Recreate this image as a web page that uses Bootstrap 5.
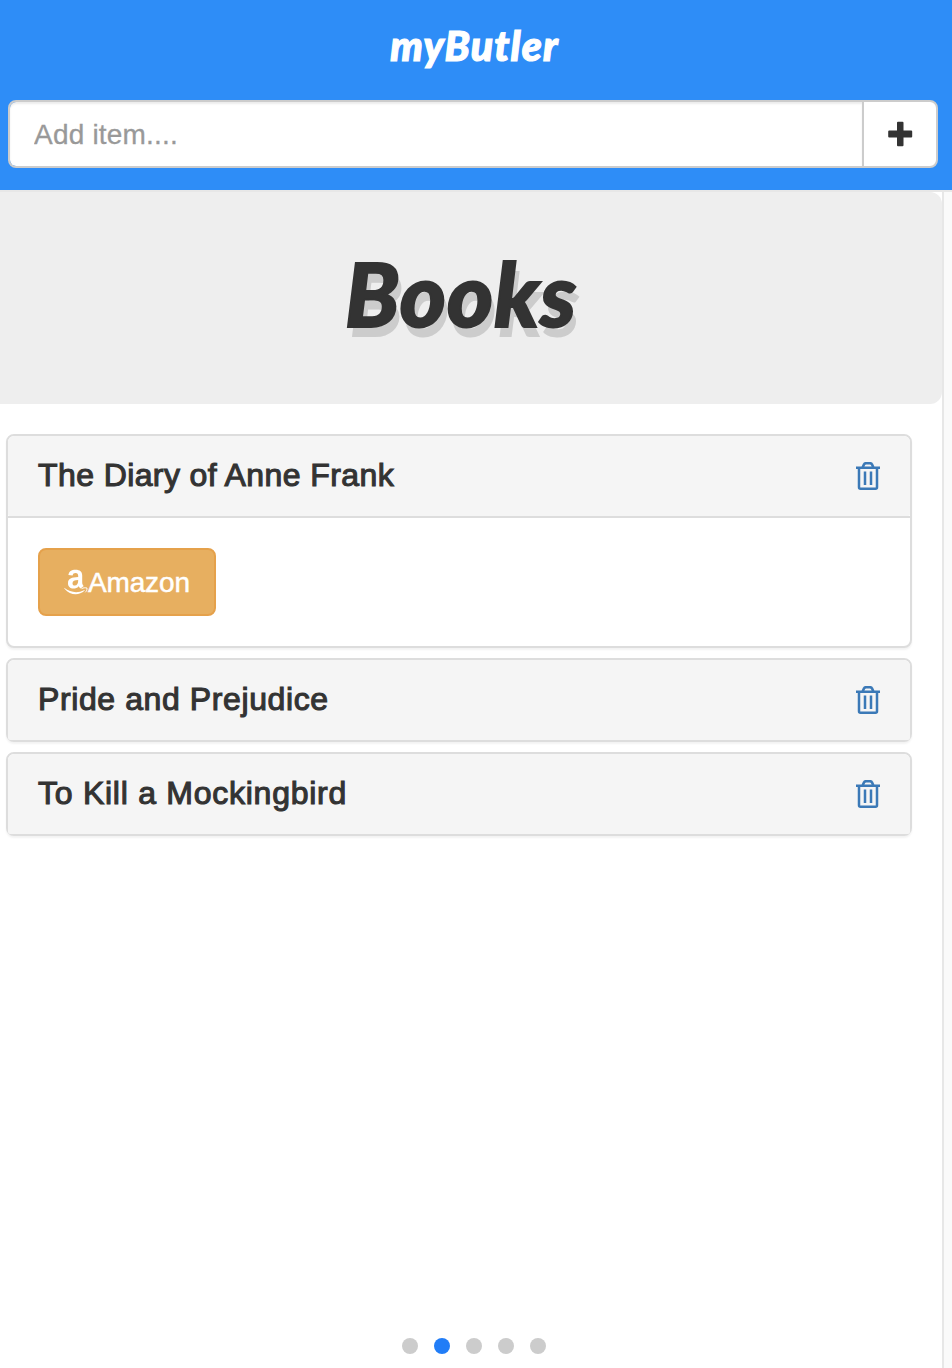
<!DOCTYPE html>
<html lang="en">
<head>
<meta charset="utf-8">
<meta name="viewport" content="width=device-width, initial-scale=1">
<title>myButler</title>
<link href="https://cdn.jsdelivr.net/npm/bootstrap@5.3.0/dist/css/bootstrap.min.css" rel="stylesheet">
<style>
body{font-family:"Liberation Sans",Arial,sans-serif;color:#333;background:#fff;height:1368px;overflow:hidden}
.topbar{height:192px;background:#2e8df7;border-bottom:2px solid #e7e7e7;padding:0 14px 0 8px}
.script{font-family:Lato,"Liberation Sans",sans-serif;font-weight:900;font-style:italic;line-height:1;stroke-linejoin:round}
.brand{height:100px;font-size:41px;letter-spacing:1.1px;padding:25px 0 0 3px;-webkit-text-stroke:1.2px #fff}
.add-form{height:68px}
.add-form .form-control{border:2px solid #ccc;border-radius:8px;padding:2px 24px 0;font-size:28px;letter-spacing:.2px;box-shadow:inset 0 2px 2px rgba(0,0,0,.075)}
.add-form .form-control::placeholder{color:#999;opacity:1;-webkit-text-stroke:.3px #999}
.add-form .btn{width:76px;border:2px solid #ccc;border-radius:8px;background:#fff;padding:0}
.add-form.input-group > .btn:not(:first-child){margin-left:-2px!important}
.slide-page{width:944px;border-right:2px solid #e7e7e7}
.next-page{background:#fafafa}
.hero{height:212px;background:#eee;border-radius:0 12px 12px 0;padding:57px 20px 0 0}
.hero h1{font-size:88px;letter-spacing:1px;text-shadow:4px 10px 0 #ccc;-webkit-text-stroke:2px #333}
.items{padding:30px 30px 0 6px;gap:10px}
.item{border:2px solid #ddd;border-radius:8px;box-shadow:0 2px 2px rgba(0,0,0,.05)}
.item .card-header{height:80px;background:#f5f5f5;border:0;border-radius:6px 6px 2px 2px;padding:0 30px}
.item .card-body{height:130px;border-top:2px solid #ddd;padding:30px}
.item h2{font-size:32px;line-height:36px;font-weight:400;letter-spacing:.4px;-webkit-text-stroke:1.1px #333;padding-bottom:2px}
.item h2.t-pride{letter-spacing:.6px}
.item h2.t-kill{letter-spacing:.74px}
.btn-amazon,.btn-amazon:hover{width:178px;height:68px;border:2px solid #e5a14b;border-radius:8px;background:#e7af60;color:#fff;font-size:28px;letter-spacing:-.15px;padding:0 0 0 24px;-webkit-text-stroke:.5px #fff}
.btn-amazon span{padding-top:1px}
.dots{gap:16px;padding:0 2px 14px 0}
.dots span{width:16px;height:16px;background:#ccc}
.dots .on{background:#217df7}
</style>
</head>
<body class="d-flex flex-column">
<header class="topbar flex-shrink-0">
  <div class="brand script text-white text-center">myButler</div>
  <form class="input-group add-form">
    <input class="form-control" type="text" placeholder="Add item....">
    <button class="btn d-flex align-items-center justify-content-center" type="button" aria-label="Add">
      <svg width="26" height="26" viewBox="0 0 26 26"><path fill="#333" d="M11 .8h4.500q1 0 1 1v7.700h7.700q1 0 1 1v5q0 1-1 1h-7.700v7.800q0 1-1 1H11q-1 0-1-1V16.500H2.200q-1 0-1-1v-5q0-1 1-1H10V1.800q0-1 1-1z"/></svg>
    </button>
  </form>
</header>
<div class="d-flex flex-grow-1">
  <main class="slide-page d-flex flex-column flex-shrink-0">
    <section class="hero text-center"><h1 class="script m-0">Books</h1></section>
    <section class="items d-flex flex-column">
      <article class="card item">
        <div class="card-header d-flex align-items-center justify-content-between"><h2 class="m-0">The Diary of Anne Frank</h2>
          <svg width="24" height="28" viewBox="0 0 24 28" fill="none" stroke="#3b79b7" stroke-width="2.500"><path d="M0 5.800h24M6.500 5.500L8 2.400Q8.500 1.200 10 1.200h4q1.500 0 2 1.200l1.500 3.100M3 6v19.200Q3 26.700 4.500 26.700h15q1.500 0 1.500-1.500V6M9 9.500V23M15 9.500V23"/></svg></div>
        <div class="card-body">
          <button class="btn btn-amazon d-flex align-items-center" type="button"><svg class="flex-shrink-0" width="24" height="28" viewBox="0 0 24 28"><path fill="#fff" fill-rule="evenodd" d="M4.400 7.100C4.800 3.500 7.500 1.700 11.500 1.700c4.500 0 6.700 2.100 6.700 5.800v6.700c0 1.700.4 2.500 1.500 3.800l-3 2.600c-1-.8-1.600-1.600-2-2.400C13.200 20 11.500 20.600 9.500 20.600c-3.500 0-5.500-2.100-5.500-5.300 0-4.600 3.700-6 10.200-6.200V8c0-2-.8-3-2.600-3-1.800 0-2.700.8-3 2.500zM14.200 12c-3.700 0-5.700.8-5.700 3.200 0 1.400.8 2.300 2.200 2.300 2.500 0 3.500-1.900 3.500-5.500z"/><path fill="#fff" d="M.2 19.800c6.500 5 13.600 5.500 19.800 2.400q1-.5.500.5c-5.500 5-14 5-20-2z"/><path d="M17.500 20.700c2-1 3.700-1.200 5.500-.6.200 1.400-.4 3-1.700 4.200" fill="none" stroke="#fff"/></svg><span>Amazon</span></button>
        </div>
      </article>
      <article class="card item">
        <div class="card-header d-flex align-items-center justify-content-between"><h2 class="m-0 t-pride">Pride and Prejudice</h2>
          <svg width="24" height="28" viewBox="0 0 24 28" fill="none" stroke="#3b79b7" stroke-width="2.500"><path d="M0 5.800h24M6.500 5.500L8 2.400Q8.500 1.200 10 1.200h4q1.500 0 2 1.200l1.500 3.100M3 6v19.200Q3 26.700 4.500 26.700h15q1.500 0 1.500-1.500V6M9 9.500V23M15 9.500V23"/></svg></div>
      </article>
      <article class="card item">
        <div class="card-header d-flex align-items-center justify-content-between"><h2 class="m-0 t-kill">To Kill a Mockingbird</h2>
          <svg width="24" height="28" viewBox="0 0 24 28" fill="none" stroke="#3b79b7" stroke-width="2.500"><path d="M0 5.800h24M6.500 5.500L8 2.400Q8.500 1.200 10 1.200h4q1.500 0 2 1.200l1.500 3.100M3 6v19.200Q3 26.700 4.500 26.700h15q1.500 0 1.500-1.500V6M9 9.500V23M15 9.500V23"/></svg></div>
      </article>
    </section>
    <nav class="dots d-flex justify-content-center mt-auto ps-2" aria-label="Pages"><span class="rounded-circle"></span><span class="rounded-circle on"></span><span class="rounded-circle"></span><span class="rounded-circle"></span><span class="rounded-circle"></span></nav>
  </main>
  <aside class="next-page flex-grow-1"></aside>
</div>
<script src="https://cdn.jsdelivr.net/npm/bootstrap@5.3.0/dist/js/bootstrap.bundle.min.js"></script>
</body>
</html>
